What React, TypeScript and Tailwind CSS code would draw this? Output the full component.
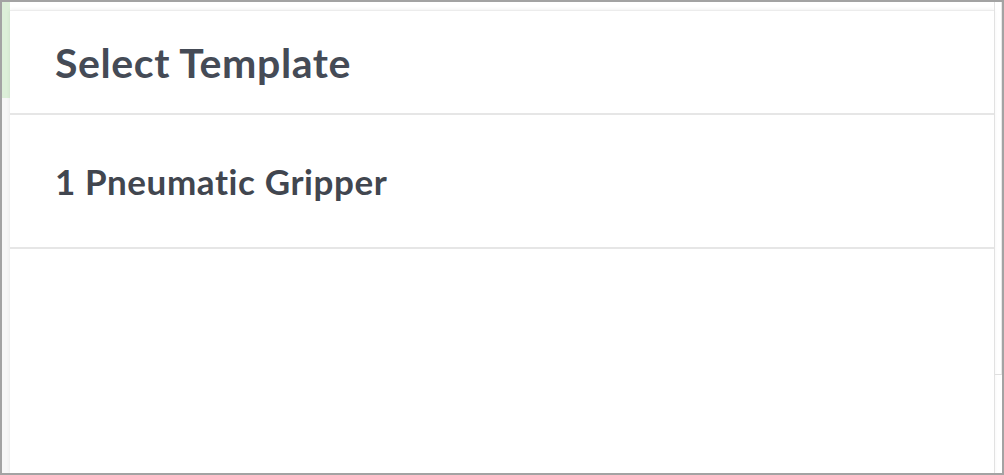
export default function App() {
  return (
    <div className="w-[1004px] h-[475px] border-2 border-[#a3a3a3] bg-white flex overflow-hidden font-['Lato',sans-serif]">
      <div className="w-[8px] flex flex-col">
        <div className="h-[96px] bg-[#dcefd8]" />
        <div className="flex-1 bg-[#f7f7f7]" />
      </div>
      <div className="flex-1 flex flex-col mt-[8px] border-t border-[#ececec] shadow-[0_0_4px_rgba(0,0,0,0.08)] bg-white">
        <div className="h-[104px] flex items-center px-[45px] border-b-2 border-[#e6e6e6]">
          <h2 className="text-[41px] leading-none font-bold text-[#454b56] tracking-[0.6px]">Select Template</h2>
        </div>
        <div className="h-[134px] flex items-center px-[45px] border-b-2 border-[#e6e6e6]">
          <span className="text-[35px] leading-none font-bold text-[#41464f] tracking-[0.6px]">1 Pneumatic Gripper</span>
        </div>
        <div className="flex-1" />
      </div>
      <div className="w-[8px] flex flex-col border-l border-[#e2e2e2]">
        <div className="h-[372px] border-r border-[#e8e8e8]" />
        <div className="flex-1 border-t border-[#e0e0e0]" />
      </div>
    </div>
  )
}
